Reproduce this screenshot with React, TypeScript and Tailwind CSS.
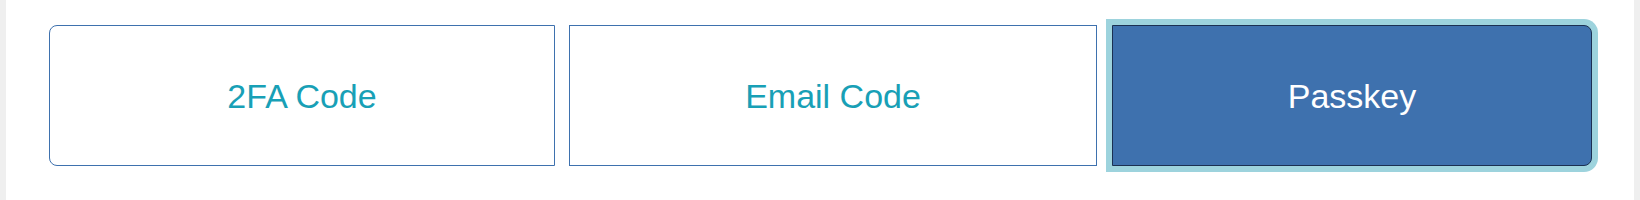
const methods = [
  { label: '2FA Code', pos: 'first' },
  { label: 'Email Code', pos: 'middle' },
  { label: 'Passkey', pos: 'last' },
] as const

const active = 'Passkey'

export default function App() {
  return (
    <div className="flex h-[200px] w-full bg-[#efefef] px-[6px] font-['Liberation_Sans',Arial,sans-serif]">
      <div className="flex flex-1 bg-white pl-[43px] pt-[25px]">
        <div className="flex h-[141px]">
          {methods.map((m) => {
            const isActive = m.label === active
            let cls =
              'flex shrink-0 items-center justify-center border text-[34px] leading-none '
            if (m.pos === 'first') cls += 'w-[506px] rounded-l-[8px] '
            if (m.pos === 'middle') cls += 'ml-[14px] w-[528px] '
            if (m.pos === 'last') cls += 'ml-[15px] w-[480px] rounded-r-[8px] '
            cls += isActive
              ? 'border-[#1b3052] bg-[#3e71ae] text-white shadow-[0_0_0_6px_#9dd3dd]'
              : 'border-[#3e71ae] bg-white text-[#18a0b6]'
            return (
              <button key={m.label} type="button" className={cls}>
                {m.label}
              </button>
            )
          })}
        </div>
      </div>
    </div>
  )
}
